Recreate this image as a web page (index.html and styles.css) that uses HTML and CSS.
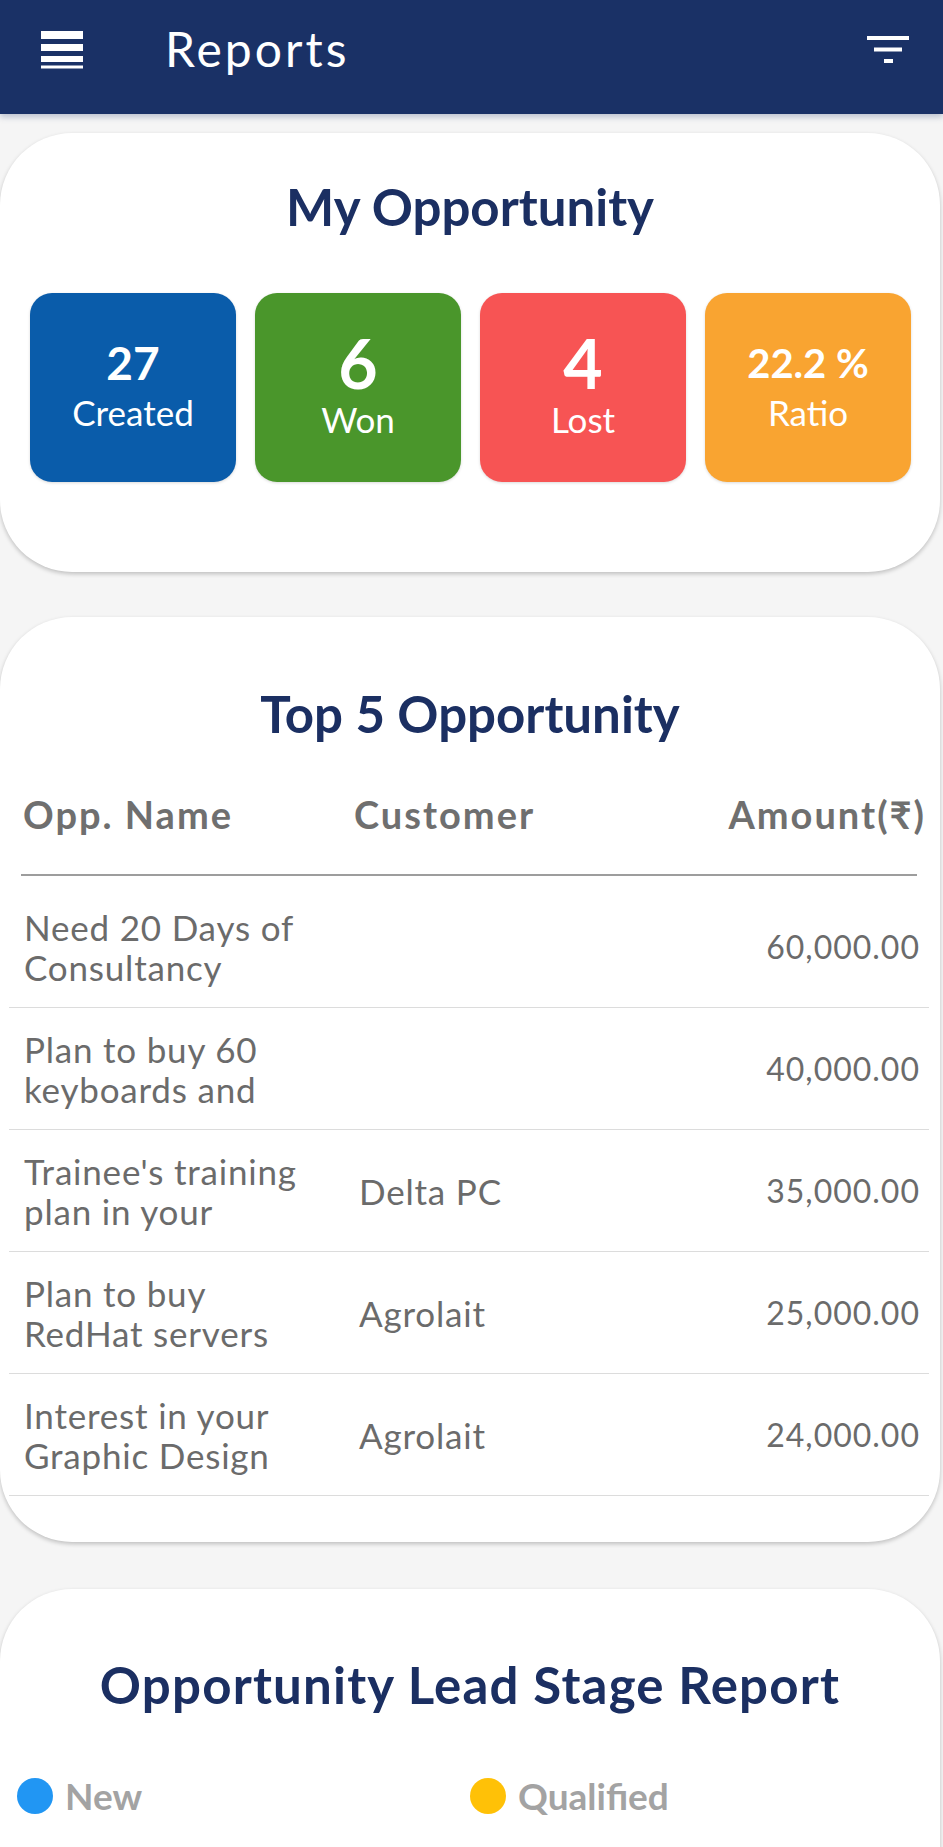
FILE: index.html
```html
<!DOCTYPE html>
<html lang="en">
<head>
<meta charset="utf-8">
<title>Reports</title>
<link rel="stylesheet" href="styles.css">
</head>
<body>
<div class="screen">
  <header class="appbar">
    <svg class="appbar-menu" width="42" height="38" viewBox="0 0 42 38" aria-hidden="true">
      <rect x="0" y="0" width="42" height="8" fill="#fff"/>
      <rect x="0" y="13" width="42" height="7" fill="#fff"/>
      <rect x="0" y="25" width="42" height="6" fill="#fff"/>
      <rect x="0" y="34.5" width="42" height="3" fill="#fff"/>
    </svg>
    <h1 class="appbar-title">Reports</h1>
    <svg class="appbar-filter" width="42" height="27" viewBox="0 0 42 27" aria-hidden="true">
      <rect x="0" y="0" width="42" height="4" fill="#fff"/>
      <rect x="7" y="11.5" width="28" height="4" fill="#fff"/>
      <rect x="17" y="23" width="9" height="4" fill="#fff"/>
    </svg>
  </header>

  <main class="content">
    <section class="card card-summary">
      <h2 class="card-title">My Opportunity</h2>
      <div class="stats">
        <div class="stat stat-created">
          <div class="stat-value">27</div>
          <div class="stat-label">Created</div>
        </div>
        <div class="stat stat-won">
          <div class="stat-value stat-value-lg">6</div>
          <div class="stat-label">Won</div>
        </div>
        <div class="stat stat-lost">
          <div class="stat-value stat-value-lg">4</div>
          <div class="stat-label">Lost</div>
        </div>
        <div class="stat stat-ratio">
          <div class="stat-value stat-value-sm">22.2 %</div>
          <div class="stat-label">Ratio</div>
        </div>
      </div>
    </section>

    <section class="card card-top">
      <h2 class="card-title">Top 5 Opportunity</h2>
      <div class="thead">
        <div class="th">Opp. Name</div>
        <div class="th">Customer</div>
        <div class="th th-amount">Amount(₹)</div>
      </div>
      <div class="tbody">
        <div class="trow">
          <div class="td td-name"><span class="ln">Need 20 Days of</span><span class="ln">Consultancy</span></div>
          <div class="td td-cust"></div>
          <div class="td td-amount">60,000.00</div>
        </div>
        <div class="trow">
          <div class="td td-name"><span class="ln">Plan to buy 60</span><span class="ln">keyboards and</span></div>
          <div class="td td-cust"></div>
          <div class="td td-amount">40,000.00</div>
        </div>
        <div class="trow">
          <div class="td td-name"><span class="ln">Trainee's training</span><span class="ln">plan in your</span></div>
          <div class="td td-cust">Delta PC</div>
          <div class="td td-amount">35,000.00</div>
        </div>
        <div class="trow">
          <div class="td td-name"><span class="ln">Plan to buy</span><span class="ln">RedHat servers</span></div>
          <div class="td td-cust">Agrolait</div>
          <div class="td td-amount">25,000.00</div>
        </div>
        <div class="trow">
          <div class="td td-name"><span class="ln">Interest in your</span><span class="ln">Graphic Design</span></div>
          <div class="td td-cust">Agrolait</div>
          <div class="td td-amount">24,000.00</div>
        </div>
      </div>
    </section>

    <section class="card card-stage">
      <h2 class="card-title card-title-wide">Opportunity Lead Stage Report</h2>
      <div class="legend">
        <div class="legend-item"><span class="dot dot-new"></span><span class="legend-text">New</span></div>
        <div class="legend-item"><span class="dot dot-qualified"></span><span class="legend-text">Qualified</span></div>
      </div>
    </section>
  </main>
</div>
</body>
</html>
```

FILE: styles.css
```css
html, body {
  margin: 0;
  padding: 0;
}

body {
  background: #f5f5f5;
  font-family: "Lato", "Noto Sans", "DejaVu Sans", sans-serif;
  color: #6d6d6d;
}

.screen {
  height: 100vh;
  overflow: hidden;
}

/* App bar */
.appbar {
  height: 114px;
  background: #1a3166;
  display: flex;
  align-items: flex-start;
  padding: 0 34px 0 41px;
  box-sizing: border-box;
  box-shadow: 0 3px 6px rgba(40, 60, 110, 0.28);
  position: relative;
  z-index: 2;
}

.appbar-menu {
  margin-top: 31px;
  flex: none;
}

.appbar-title {
  margin: 25px 0 0 82px;
  font-size: 48px;
  line-height: 48px;
  font-weight: 400;
  letter-spacing: 3px;
  color: #fff;
  flex: 1;
}

.appbar-filter {
  margin-top: 36px;
  flex: none;
}

/* Cards */
.content {
  display: flex;
  flex-direction: column;
}

.card {
  background: #fff;
  border-radius: 72px;
  margin-right: 3px;
  box-shadow: 0 2px 4px rgba(0, 0, 0, 0.22);
}

.card-title {
  margin: 0;
  text-align: center;
  font-size: 51px;
  line-height: 60px;
  font-weight: 700;
  color: #1b2f62;
}

.card-title-wide {
  letter-spacing: 1.2px;
}

.card-summary {
  margin-top: 19px;
  padding: 44px 0 90px;
}

.card-top {
  margin-top: 45px;
  padding: 67px 0 46px;
}

.card-stage {
  margin-top: 47px;
  padding: 66px 0 200px;
}

/* Stats */
.stats {
  margin-top: 56px;
  padding-left: 30px;
  display: flex;
  gap: 19px;
}

.stat {
  width: 206px;
  height: 189px;
  border-radius: 22px;
  display: flex;
  flex-direction: column;
  align-items: center;
  justify-content: center;
  color: #fff;
  box-sizing: border-box;
  padding-bottom: 4px;
  box-shadow: 0 1px 3px rgba(0, 0, 0, 0.15);
}

.stat-created { background: #0a5caa; }
.stat-won { background: #4a962b; }
.stat-lost { background: #f75454; }
.stat-ratio { background: #f9a431; }

.stat-value {
  font-size: 46px;
  line-height: 46px;
  font-weight: 700;
}

.stat-value-lg {
  font-size: 68px;
  line-height: 60px;
}

.stat-value-sm {
  font-size: 40px;
  line-height: 46px;
}

.stat-label {
  margin-top: 6px;
  font-size: 35px;
  line-height: 40px;
  font-weight: 400;
}

/* Table */
.thead {
  margin: 47px 23px 0 21px;
  padding: 0 0 37px 2px;
  border-bottom: 2px solid #9d9d9d;
  display: grid;
  grid-template-columns: 331px 1fr auto;
}

.th {
  font-size: 38px;
  line-height: 46px;
  font-weight: 700;
  letter-spacing: 2px;
  color: #6f6f6f;
  white-space: nowrap;
}

.th-amount {
  margin-right: -9px;
}

.tbody {
  margin: 10px 11px 0 9px;
}

.trow {
  display: grid;
  grid-template-columns: 335px 1fr auto;
  align-items: center;
  padding: 21px 10px 20px 15px;
  border-bottom: 1px solid #dcdcdc;
}

.td {
  font-size: 35px;
  line-height: 40px;
  letter-spacing: 0.8px;
  color: #6b6b6b;
}

.ln {
  display: block;
  white-space: nowrap;
}

.td-amount {
  font-size: 32px;
  letter-spacing: 1px;
  margin-right: -1px;
  text-align: right;
}

/* Legend */
.legend {
  margin-top: 61px;
  padding-left: 17px;
  display: grid;
  grid-template-columns: 453px 453px;
}

.legend-item {
  display: flex;
  align-items: center;
  gap: 12px;
}

.dot {
  width: 36px;
  height: 36px;
  border-radius: 50%;
  flex: none;
}

.dot-new { background: #2196f3; }
.dot-qualified { background: #ffc107; }

.legend-text {
  font-size: 37px;
  line-height: 40px;
  font-weight: 700;
  color: #a3a3a3;
}
```
